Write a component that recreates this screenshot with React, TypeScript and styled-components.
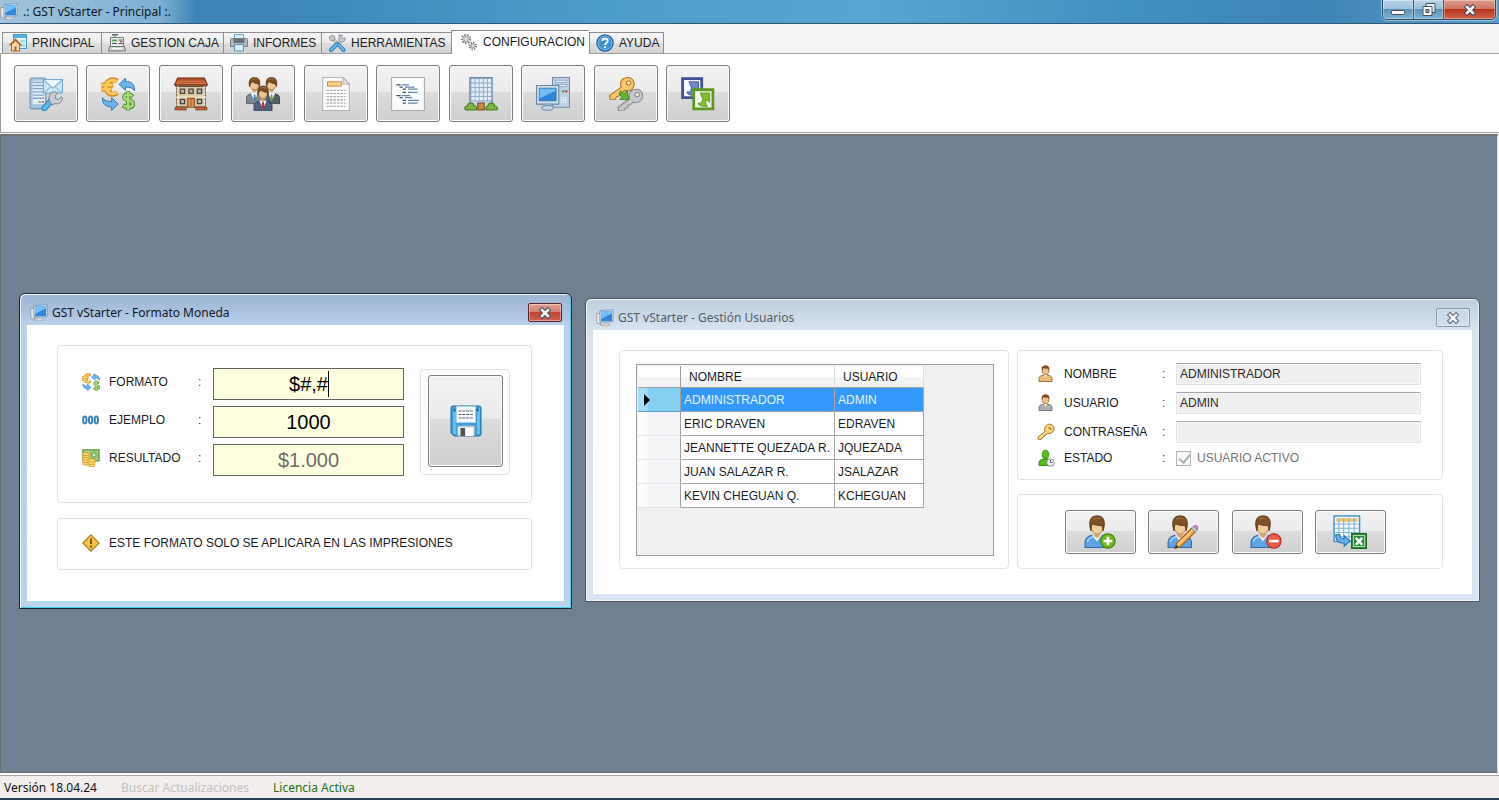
import React from "react";
import styled, { createGlobalStyle, css } from "styled-components";

const arial = `"Liberation Sans", Arial, sans-serif`;
const segoe = `"Segoe UI", "Noto Sans", "Open Sans", sans-serif`;

const GlobalStyle = createGlobalStyle`
  * { box-sizing: border-box; }
  body { margin: 0; background: #708090; }
  button, input { font: inherit; color: inherit; margin: 0; }
  svg { display: block; flex: none; }
`;

/* ---------- shell ---------- */

const Page = styled.div`
  display: flex;
  flex-direction: column;
  min-height: 100vh;
  font: 12px/16px ${arial};
  color: #1c1c1c;
  background: #f5f5f5;
`;

const TitleBar = styled.header`
  display: flex;
  justify-content: space-between;
  align-items: flex-start;
  height: 24px;
  padding-right: 3px;
  border-bottom: 1px solid #2d5878;
  background:
    linear-gradient(90deg, rgba(196, 218, 234, 0.75), rgba(170, 205, 228, 0.6) 160px, rgba(170, 205, 228, 0) 196px),
    linear-gradient(90deg, #3c82b5 0, #3c86b9 18%, #4c9ccb 40%, #57a5d0 58%, #4190c2 75%, #3d84b7 88%, #5b9cc6 100%);
`;

const Caption = styled.h1`
  display: flex;
  align-items: center;
  gap: 5px;
  height: 24px;
  margin: 0;
  font: 12px/16px ${segoe};
  color: #0c1520;
`;

const CaptionButtons = styled.div`
  display: flex;
  height: 20px;
  border: 1px solid #2c4a62;
  border-top: 0;
  border-radius: 0 0 5px 5px;
  overflow: hidden;
  box-shadow: 0 0 0 1px rgba(200, 225, 240, 0.6);
`;

const CaptionButton = styled.button<{ $close?: boolean }>`
  display: flex;
  align-items: center;
  justify-content: center;
  width: ${(p) => (p.$close ? 52 : 30)}px;
  padding: 0;
  border: 0;
  border-left: 1px solid #35566f;
  box-shadow: inset 0 0 0 1px rgba(255, 255, 255, 0.35);
  background: ${(p) =>
    p.$close
      ? "linear-gradient(#dc9c8c 0, #cf7765 45%, #b5301a 46%, #d0644a 100%)"
      : "linear-gradient(#b4d3e8 0, #9cc1da 45%, #5b8fb5 46%, #7fb4d6 100%)"};
  &:first-child { border-left: 0; }
`;

const TabStrip = styled.div`
  display: flex;
  align-items: flex-end;
  height: 29px;
  padding-left: 2px;
  background: #f5f5f5;
`;

const Tab = styled.button<{ $width: number; $active?: boolean }>`
  display: flex;
  align-items: center;
  gap: 5px;
  width: ${(p) => p.$width}px;
  height: 21px;
  padding: 0 0 0 6px;
  border: 1px solid #8c8e94;
  border-bottom: 0;
  border-right-width: 0;
  white-space: nowrap;
  background: linear-gradient(#f4f4f4 0, #ececec 50%, #dedede 51%, #d2d2d2 100%);
  &:last-child { border-right-width: 1px; }
  ${(p) =>
    p.$active &&
    css`
      position: relative;
      height: 24px;
      margin-bottom: -1px;
      padding: 0 0 2px 8px;
      background: #fff;
    `}
`;

const Toolbar = styled.div`
  padding: 11px 13px 10px;
  border: 1px solid #a0a0a0;
  border-right: 0;
  background: #fff;
`;

const ToolRow = styled.div`
  display: flex;
  justify-content: space-between;
  width: 716px;
  max-width: 100%;
`;

const FaceButton = styled.button<{ $width: number; $height: number }>`
  display: flex;
  align-items: center;
  justify-content: center;
  width: ${(p) => p.$width}px;
  height: ${(p) => p.$height}px;
  padding: 0;
  border: 1px solid #7c7c7c;
  border-radius: 3px;
  box-shadow: inset 0 0 0 1px #fafafa;
  background: linear-gradient(#f2f2f2 0, #ebebeb 47%, #dcdcdc 48%, #cfcfcf 100%);
`;

const Desktop = styled.main`
  position: relative;
  flex: 1;
  min-height: 500px;
  margin-top: 1px;
  margin-right: 1px;
  border: 1px solid #6a7076;
  border-top: 2px solid #6f7378;
  border-right-color: #e3e3e3;
  background: #708090;
  overflow: hidden;
`;

const StatusBar = styled.footer`
  display: flex;
  align-items: center;
  gap: 24px;
  height: 27px;
  padding: 2px 4px 0;
  border-top: 2px solid #fbfbfb;
  border-bottom: 2px solid #24465a;
  box-shadow: inset 0 1px 0 #a5a5a5;
  background: #f1eeec;
  font: 12px/16px ${segoe};
`;

const StatusText = styled.span<{ $tone?: "muted" | "ok" }>`
  color: ${(p) => (p.$tone === "muted" ? "#c3c0be" : p.$tone === "ok" ? "#1c7320" : "#141414")};
`;

/* ---------- child windows ---------- */

const Window = styled.section<{ $active?: boolean; $left: number; $top: number; $width: number }>`
  position: absolute;
  left: ${(p) => p.$left}px;
  top: ${(p) => p.$top}px;
  width: ${(p) => p.$width}px;
  padding: 0 7px 7px;
  border: 1px solid ${(p) => (p.$active ? "#1d262e" : "#4e565e")};
  border-radius: 6px 6px 0 0;
  background: ${(p) =>
    p.$active
      ? "linear-gradient(#9db6d3 0, #a9c1dd 16px, #b9d0ea 31px, #bcd3ec 100%)"
      : "linear-gradient(#c0cfdc 0, #cbd9e6 16px, #d7e3ef 31px, #d9e5f2 100%)"};
  box-shadow: ${(p) =>
    p.$active
      ? "inset 1px 1px 0 #f0f6fb, inset -1px -1px 0 #45cdea"
      : "inset 1px 1px 0 #eef3f7, inset -1px -1px 0 #eef3f7"};
`;

const WindowBar = styled.header`
  display: flex;
  align-items: center;
  justify-content: space-between;
  height: 31px;
  padding: 6px 2px 0 3px;
`;

const WindowTitle = styled.h2<{ $active?: boolean }>`
  display: flex;
  align-items: center;
  gap: 4px;
  margin: 0;
  font: 12px/16px ${segoe};
  color: ${(p) => (p.$active ? "#10161d" : "#525c66")};
`;

const WindowClose = styled.button<{ $active?: boolean }>`
  display: flex;
  align-items: center;
  justify-content: center;
  width: 34px;
  height: 19px;
  padding: 0;
  border: 1px solid ${(p) => (p.$active ? "#57202a" : "#8797aa")};
  border-radius: 2px;
  background: ${(p) =>
    p.$active
      ? "linear-gradient(#dfa197 0, #d48073 45%, #bc4030 46%, #cc6450 100%)"
      : "linear-gradient(#cad8e5, #d3dfeb)"};
  box-shadow: inset 0 0 0 1px rgba(255, 255, 255, 0.4);
`;

const Client = styled.div`
  background: #fff;
`;

const Group = styled.div`
  border: 1px solid #dde5eb;
  border-radius: 4px;
`;

const CurrencyClient = styled(Client)`
  display: flex;
  flex-direction: column;
  gap: 15px;
  padding: 20px 32px 31px 30px;
`;

const CurrencyGroup = styled(Group)`
  display: flex;
  gap: 16px;
  align-items: flex-start;
  padding: 22px 21px 26px 24px;
`;

const CurrencyFields = styled.div`
  display: flex;
  flex: 1;
  flex-direction: column;
  gap: 6px;
`;

const CurrencyRow = styled.div`
  display: flex;
  align-items: flex-start;
  height: 32px;
`;

const FieldLabel = styled.label<{ $width: number }>`
  display: flex;
  align-items: center;
  gap: 9px;
  width: ${(p) => p.$width}px;
`;

const Colon = styled.span<{ $width: number }>`
  width: ${(p) => p.$width}px;
  color: #4b3b3b;
`;

const CurrencyCaption = styled.div`
  display: flex;
  align-items: center;
  height: 28px;
`;

const CurrencyBox = styled.div`
  position: relative;
  flex: 1;
  height: 32px;
`;

const CurrencyInput = styled.input`
  width: 100%;
  height: 32px;
  padding: 0;
  border: 1px solid #646464;
  border-radius: 0;
  outline: 0;
  background: #ffffe1;
  font: 20px/30px ${arial};
  text-align: center;
  color: #000;
  &:read-only { color: #6d6d6d; }
`;

const Caret = styled.span`
  position: absolute;
  top: 3px;
  left: calc(50% + 19px);
  width: 1px;
  height: 26px;
  background: #000;
`;

const SaveFrame = styled(Group)`
  padding: 5px 6px 7px 7px;
  margin-top: 1px;
`;

const Notice = styled(Group)`
  display: flex;
  align-items: center;
  gap: 9px;
  height: 52px;
  padding: 0 0 2px 24px;
`;

const UsersClient = styled(Client)`
  display: grid;
  grid-template-columns: 390px 1fr;
  grid-template-rows: 130px 75px;
  gap: 14px 8px;
  padding: 20px 29px 25px 26px;
`;

const GridGroup = styled(Group)`
  grid-row: 1 / 3;
  padding: 13px 14px 12px 16px;
`;

const GridPanel = styled.div`
  height: 100%;
  padding: 1px;
  border: 1px solid #a0a0a0;
  background: #f0f0f0;
`;

const DataGrid = styled.table`
  width: 286px;
  table-layout: fixed;
  border-collapse: separate;
  border-spacing: 0;
  text-align: left;
  white-space: nowrap;
`;

const HeadCell = styled.th<{ $width: number }>`
  width: ${(p) => p.$width}px;
  height: 22px;
  padding: 0 0 0 8px;
  border-right: 1px solid #dcdde0;
  border-bottom: 1px solid #a0a0a0;
  font-weight: 400;
  background: linear-gradient(#fff 0, #fff 50%, #f4f5f7 51%, #f1f2f4 100%);
  &:first-child { border-right-color: #a0a0a0; }
`;

const RowHead = styled.th<{ $selected: boolean }>`
  height: 24px;
  padding: 0 0 0 5px;
  border-right: 1px solid #a0a0a0;
  border-bottom: 1px solid ${(p) => (p.$selected ? "#5c9dbd" : "#e2e3e6")};
  background: ${(p) =>
    p.$selected
      ? "linear-gradient(90deg, #a5def5 0, #a5def5 22%, #84d0f1 23%)"
      : "linear-gradient(90deg, #fff 0, #fafafb 22%, #f3f4f6 23%)"};
`;

const Cell = styled.td<{ $selected: boolean }>`
  padding: 0 0 0 3px;
  border-right: 1px solid #a6a6a6;
  border-bottom: 1px solid #a6a6a6;
  color: ${(p) => (p.$selected ? "#e6f3ff" : "inherit")};
  background: ${(p) => (p.$selected ? "#3399ff" : "#fff")};
`;

const DetailGroup = styled(Group)`
  display: flex;
  flex-direction: column;
  gap: 7px;
  padding: 12px 21px 0 19px;
`;

const DetailRow = styled.div`
  display: flex;
  align-items: center;
  height: 22px;
  &:last-child { height: 16px; }
`;

const DetailInput = styled.input`
  flex: 1;
  min-width: 0;
  height: 22px;
  padding: 0 3px;
  border: 1px solid #dfe3e8;
  border-top-color: #a3a5aa;
  border-radius: 1px;
  background: #efefef;
  box-shadow: inset 0 0 0 1px #f8f8f8;
  color: #2a2a2a;
`;

const ActiveLabel = styled.label`
  display: flex;
  align-items: center;
  gap: 6px;
  color: #747474;
`;

const Check = styled.input`
  appearance: none;
  width: 15px;
  height: 15px;
  border: 1px solid #b4b4b4;
  background: #f7f7f7;
  &:checked::before {
    content: "";
    display: block;
    width: 5px;
    height: 9px;
    margin: 0 0 0 4px;
    border: solid #a9adb3;
    border-width: 0 2px 2px 0;
    transform: rotate(40deg);
  }
`;

const ActionGroup = styled(Group)`
  display: flex;
  align-items: center;
  justify-content: space-between;
  padding: 0 56px 0 47px;
`;

/* ---------- icons ---------- */

type IconProps = { size?: number };

const Svg = ({ size = 34, box = 32, children }: { size?: number; box?: number; children: React.ReactNode }) => (
  <svg width={size} height={size} viewBox={`0 0 ${box} ${box}`} fill="none" aria-hidden="true">
    {children}
  </svg>
);

const WindowIcon = () => (
  <Svg size={18} box={18}>
    <path d="M.8 4.500h3.500V15L.8 14z" fill="#ecebe6" stroke="#8c8d90" strokeWidth=".7" />
    <path d="M7 12.500l-1 3.500h8l-1-3.500z" fill="#cdd1d5" />
    <path d="M4 16q6.500-2.500 10 0-4 1.500-10 0z" fill="#f4f5f6" stroke="#8f949a" strokeWidth=".6" />
    <path d="M4 1.500l13-.7v12L4 13z" fill="#eaf3fa" stroke="#4f7fa9" strokeWidth=".7" />
    <path d="M5 2.500L16 2v10l-11 .2z" fill="#2f86da" />
    <path d="M5 2.500L16 2v2.500L5 10z" fill="#74bff6" />
  </Svg>
);

const CloseGlyph = ({ dim }: { dim?: boolean }) => (
  <svg width="14" height="12" viewBox="0 0 14 12" aria-hidden="true">
    <path d="M4 3l6 6M10 3L4 9" stroke={dim ? "#5c6a7c" : "#4a4f5c"} strokeWidth="4.600" strokeLinecap="square" />
    <path d="M4 3l6 6M10 3L4 9" stroke="#f6f7f9" strokeWidth="2.500" strokeLinecap="square" />
  </svg>
);

const MinGlyph = () => (
  <svg width="14" height="12" viewBox="0 0 14 12" aria-hidden="true">
    <rect x=".5" y="6.500" width="13" height="4" rx="1" fill="#fff" stroke="#44505e" />
  </svg>
);

const RestoreGlyph = () => (
  <svg width="14" height="13" viewBox="0 0 14 13" aria-hidden="true">
    <path d="M4 .5h9v9H4z" fill="#e9eef2" stroke="#44505e" />
    <path d="M1 3.500h9v9H1z" fill="#fff" stroke="#44505e" />
    <path d="M4 6.500h3v3H4z" fill="#8ab0cc" stroke="#44505e" />
  </svg>
);

const Wrench = () => (
  <>
    <path d="M14.500 29.500l6-7" stroke="#2477b5" strokeWidth="5.600" strokeLinecap="round" />
    <path d="M14.500 29.500l6-7" stroke="#5cb8ec" strokeWidth="3.800" strokeLinecap="round" />
    <path
      d="M19 21.500c-1-4.500 2-8 6.500-7.500l1.500 1.500-2.500 2 .5 3 3 .5 2.500-2.500 1 1.500c0 4-4 6-7.500 5l-2.500 1.500z"
      fill="#c9ced4"
      stroke="#757d85"
      strokeWidth=".9"
    />
  </>
);

const ServerMailIcon = () => (
  <Svg>
    <rect x="1" y="1" width="15" height="29" rx="1.500" fill="#a9c5de" stroke="#6f93b3" />
    <path d="M3.500 3.500H15v22H3.500z" fill="#e4eef6" />
    <path d="M3.500 5h11M3.500 8h11M3.500 11h11M3.500 14h11M3.500 17h11M3.500 20h11" stroke="#87a7c4" strokeWidth="1.200" />
    <path d="M9 23.500h2" stroke="#54a33b" strokeWidth="1.500" />
    <path d="M12 23.500h2" stroke="#c8532e" strokeWidth="1.500" />
    <rect x="13.500" y="2.500" width="18" height="12.500" fill="#cbe5f9" stroke="#6da3ce" />
    <path d="M14 15l7-6.500M31 15l-7-6.500" stroke="#8fbadd" />
    <path d="M14 3l8.500 7.500L31 3" fill="#f2f9fe" stroke="#79a9d0" />
    <Wrench />
  </Svg>
);

const CurrencyIcon = ({ size }: IconProps) => (
  <Svg size={size}>
    <g fill="none">
      <path d="M15.500 4C8 0 4.500 6 4.500 9.500S8 19 15.500 15M.5 7.500h11M.5 11.500h10" stroke="#c98a24" strokeWidth="4.600" />
      <path d="M15 4.300C8 .8 4.500 6 4.500 9.500S8 18 15 14.700M1 7.500h10M1 11.500h9" stroke="#fbc857" strokeWidth="2.800" />
      <path d="M30 18.500c-3-3-8.500-2.500-8 .8.500 3.500 8 2 8 6 0 4-6 3.700-9.500 1.500M25.500 13.500v18" stroke="#4f9138" strokeWidth="4.200" />
      <path d="M29.500 18.200c-3-2.500-8-2.200-7.500 1.100.5 3.500 8 2 8 6 0 3.700-6 3.500-9 1.500M25.500 14v17" stroke="#aadb7a" strokeWidth="2.300" />
    </g>
    <path d="M17 7L23 1v3c5 0 9 2.500 8.500 9-1.500-3-4.500-3.500-8.500-3.500v3z" fill="#6db5e8" stroke="#2c74ad" strokeWidth=".9" />
    <path d="M16 25.500L10 31.500V28.200c-5 0-9-2.500-8.500-8.700 1.500 3 4.500 3.500 8.500 3.500v-3.500z" fill="#6db5e8" stroke="#2c74ad" strokeWidth=".9" />
  </Svg>
);

const HouseIcon = () => (
  <Svg>
    <path d="M2.500 9h27v19h-27z" fill="#d9cba9" stroke="#776b51" />
    <path d="M3.500 1h25l3 6.500H.5z" fill="#b4532b" stroke="#6d2b15" />
    <path d="M2.500 4h27M1.500 6h29" stroke="#d37a48" />
    <path d="M1 8.500h30" stroke="#6b3a22" strokeWidth="1.200" />
    <path d="M2 19h28" stroke="#f2e9d0" strokeWidth="1.200" />
    <path d="M6 11.500h4v4H6zM14 11.500h4v4h-4zM22 11.500h4v4h-4zM6 21h4v4H6zM22 21h4v4h-4z" fill="#a9b9c9" stroke="#5c3e34" strokeWidth="1.200" />
    <path d="M3.500 9v10M28.500 9v10M3.500 19v9M28.500 19v9" stroke="#f4eedf" strokeDasharray="1.500 1.500" strokeWidth="1.600" />
    <path d="M13 20h6v9h-6z" fill="#e79a54" stroke="#7d3c1d" />
    <path d="M16 20v9" stroke="#9c5329" />
    <path d="M1 28.500h11v2.500H1zM20 28.500h11v2.500H20z" fill="#c8673b" stroke="#7b351c" strokeWidth=".7" />
    <path d="M12 29h8v2.500h-8z" fill="#d6d6d0" />
  </Svg>
);

const Head = ({ x, y }: { x: number; y: number }) => (
  <g transform={`translate(${x} ${y})`}>
    <path d="M3 8h5v4l-2.500 2L3 12z" fill="#cf9f66" />
    <ellipse cx="5.500" cy="6.500" rx="4.200" ry="5" fill="#eac694" stroke="#9a6a38" strokeWidth=".6" />
    <path d="M.8 8.500C-.5 2 2 0 5.500 0s6 2 4.700 8.500L9.500 6C7 6 5 5 3.500 4L1.500 6z" fill="#7b4a1f" stroke="#4f2c0e" strokeWidth=".6" />
    <path d="M3 2q2.500-1.500 5 0" stroke="#a97a43" strokeWidth=".8" />
  </g>
);

const PeopleIcon = () => (
  <Svg>
    <path d="M0 25v-5.500q1-3 5-4h7q3 .5 4 3V25z" fill="#80868d" stroke="#494f57" strokeWidth=".7" />
    <path d="M32 25v-5.500q-1-3-5-4h-7q-3 .5-4 3V25z" fill="#595e65" stroke="#33373c" strokeWidth=".7" />
    <path d="M4.500 15l3.500 8 3-8zM21 15l3 8 3.500-8z" fill="#f4f6f8" />
    <path d="M7.500 16.500h1.200l.8 4.500-1.300 2-1.200-2z" fill="#4579b8" />
    <path d="M23.500 16.500h1.200l.6 4.500-1.200 2-1.200-2z" fill="#58a038" />
    <Head x={2.500} y={0.500} />
    <Head x={18.500} y={0.500} />
    <path d="M7.500 31.500V26q1-2.500 5-3.500h7q4 1 5 3.500v5.500z" fill="#4f6180" stroke="#2c394e" strokeWidth=".7" />
    <path d="M12.500 22l3.500 8 3.500-8z" fill="#fff" />
    <path d="M15.300 23h1.400l.8 5-1.500 2.500-1.500-2.500z" fill="#c4302b" />
    <Head x={10.500} y={8.500} />
  </Svg>
);

const DocumentIcon = () => (
  <Svg>
    <path d="M3.500.5h19l6 6v25h-25z" fill="#fbfbfb" stroke="#b4b4b4" />
    <path d="M22.500.5v6h6z" fill="#e2e2e2" stroke="#b4b4b4" />
    <rect x="8" y="4.500" width="13" height="4" fill="#fbd59a" stroke="#db8d35" />
    <path
      d="M7 12.500h18M7 15.500h18M7 18.500h18M7 21.500h18M7 24.500h18M7 27.500h18"
      stroke="#9d9d9d"
      strokeDasharray="2.500 .8"
    />
  </Svg>
);

const ListIcon = () => (
  <Svg>
    <path d="M.5.500h31v31H.5z" fill="#f4f6f7" stroke="#adadad" />
    <path d="M2 2h28v28H2z" fill="#fdfefe" />
    <path d="M5 7.500h4M8 9.500h3M11 11.500h3M11 14.500h3M5 17.500h4M8 19.500h3M11 22h3M11 24.500h3" stroke="#394b66" strokeWidth="1.200" />
    <path d="M10 7.500h7M13 9.500h9M16 11.500h9M16 14.500h9M10 17.500h8M13 19.500h7M16 22h10M16 24.500h9" stroke="#6484b0" strokeWidth="1.200" />
  </Svg>
);

const TowerIcon = () => (
  <Svg>
    <path d="M5.500.5h21v30h-21z" fill="#93aec8" stroke="#6a87a4" />
    {[2, 6.2, 10.4, 14.6, 18.8].map((y) =>
      [7, 10.9, 14.8, 18.7, 22.6].map((x) => (
        <rect key={`${x}-${y}`} x={x} y={y} width="3" height="3.200" fill="#e3edf7" />
      )),
    )}
    <path d="M7 23h18v7H7z" fill="#c6d6e5" />
    <path d="M13 24.500h6V31h-6z" fill="#c98746" stroke="#7d4a1d" />
    <path d="M1.500 31c-1.500-2-.5-3.500 1.500-3.500C3.500 23.500 9 23.500 9.500 27c2.500.2 2.800 2.500 1.800 4zM21 31c-1-2 0-3.500 1.500-3.500 0-4 6-4 6.500 0 2.500.2 3 2 2 3.500z" fill="#7cb544" stroke="#467a1f" />
  </Svg>
);

const ComputerIcon = () => (
  <Svg>
    <path d="M15.500.5h16v28h-16z" fill="#bfd2e3" stroke="#6d8dab" />
    <path d="M18 3h11v2H18zM18 7h11v2H18z" fill="#e8f1f8" stroke="#7f9fbb" strokeWidth=".7" />
    <path d="M24.500 13.500h2" stroke="#48a132" strokeWidth="2" />
    <path d="M27.500 13.500h2" stroke="#c9392b" strokeWidth="2" />
    <path d="M24 19v6M26 19v6M28 19v6" stroke="#f2f7fb" strokeDasharray="1.200 .8" strokeWidth="1.300" />
    <path d="M.5 8h21v17.500H.5z" fill="#cfdfeb" stroke="#6486a4" />
    <path d="M3 10.500h16v12H3z" fill="#2d86d8" stroke="#3f6d95" strokeWidth=".6" />
    <path d="M3.500 11h15v2L3.500 20z" fill="#72bdf3" />
    <path d="M8.500 25.500h5v2.500h-5z" fill="#a9bfd2" />
    <ellipse cx="11" cy="29" rx="5.500" ry="2.300" fill="#c6d8e7" stroke="#7091ad" />
  </Svg>
);

const Key = ({ fill, edge }: { fill: string; edge: string }) => (
  <>
    <path
      d="M11.500 9.500C9.500 4 13 .5 17.500.5c5 0 7.500 5 5.500 9-1.800 3.500-5.500 4.300-8.500 3.200L12.500 15l-2.500.5-.5 2.500-2.500.5-1 2.500H1l-.5-3.500z"
      fill={fill}
      stroke={edge}
    />
    <circle cx="18.500" cy="5.500" r="2" fill="#f3efe6" stroke={edge} />
  </>
);

const KeysIcon = () => (
  <Svg>
    <Key fill="#f5c76c" edge="#b3751f" />
    <g transform="translate(8 11)">
      <Key fill="#c6c8ca" edge="#85888c" />
    </g>
    <path d="M11 13l3 3 3-3.500 1.500 9L10 21l2.300-2.200L9.500 16z" fill="#63b72e" stroke="#397d13" strokeWidth=".8" />
  </Svg>
);

const LinkTile = ({ edge, fill }: { edge: string; fill: string }) => (
  <>
    <path d="M1.500 1.500h18v18h-18z" fill="#f7f8fc" stroke={edge} strokeWidth="2.600" />
    <path d="M7.500 4.500h9v9l-2.800-2.500c-1.500 2-1.200 3.500.8 6-4.500.5-8.500 0-9-3 2.500.5 4-.5 4.300-4z" fill={fill} stroke={edge} strokeWidth=".8" />
  </>
);

const ShortcutsIcon = () => (
  <Svg>
    <LinkTile edge="#3f4f93" fill="#7386c6" />
    <g transform="translate(10.500 10.500)">
      <LinkTile edge="#5c9a17" fill="#7fbb2a" />
    </g>
  </Svg>
);

const HomeTabIcon = () => (
  <Svg size={18} box={18}>
    <path d="M4.500.5h13v14h-13z" fill="#e7f3fb" stroke="#4595c6" />
    <path d="M5 1h12v3H5z" fill="#59b3e2" />
    <path d="M11 6h5v2.500h-5zM12 10h4v3h-4z" fill="#a9d8f1" />
    <path d="M2.500 10.500V17h8v-6.500L6.500 7z" fill="#f6d9a6" stroke="#9a6426" />
    <path d="M.5 11.500l6-6 6 6" stroke="#b06a2a" strokeWidth="1.700" />
    <path d="M5.500 12.500h2V17h-2z" fill="#a35c27" />
  </Svg>
);

const RegisterIcon = () => (
  <Svg size={18} box={18}>
    <path d="M4 .8h6" stroke="#555b58" strokeWidth="1.400" />
    <path d="M7 1v3" stroke="#757b78" />
    <path d="M2.500 3.500h13v9h-13z" fill="#eef0ee" stroke="#767c79" />
    <path d="M4 5.500h5v2H4z" fill="#58a85a" />
    <path d="M10.500 6h4M10.500 9.500h4M4 9.500h5" stroke="#454b48" />
    <path d="M12 7.700h2.500" stroke="#cc4433" strokeWidth="1.200" />
    <path d="M1.500 12.500h15l1 4.500H.5z" fill="#cfd5d2" stroke="#6a706d" />
    <path d="M4 14.700h10" stroke="#fff" />
  </Svg>
);

const PrinterIcon = () => (
  <Svg size={18} box={18}>
    <path d="M4.500.5h9v5h-9z" fill="#d9eefa" stroke="#6aa7cc" />
    <path d="M.5 5.500q0-1 1-1h15q1 0 1 1v7H.5z" fill="#b4b9be" stroke="#7b8086" />
    <path d="M3.500 5h11v4h-11z" fill="#6b7076" />
    <path d="M4.500 10.500h9v6.500h-9z" fill="#c4e4f7" stroke="#5c9ac0" />
    <path d="M6 13h6M6 15h6" stroke="#fff" />
  </Svg>
);

const ToolsIcon = () => (
  <Svg size={18} box={18}>
    <path d="M5 5l10 10.500" stroke="#8b9197" strokeWidth="3" />
    <path d="M5 5l10 10.500" stroke="#d6dade" strokeWidth="1.500" />
    <path d="M1 3.500L4 1l3 2-1 3.500L3 7zM11 .8l3.500.7-1 2 1.500 1 2-.8.2 2.500L14 8.500l-3-1.500z" fill="#c8cdd2" stroke="#7c8288" strokeWidth=".8" />
    <path d="M11 8l-2 2" stroke="#888e94" strokeWidth="3" />
    <path d="M8.500 10.500L3 16M11 11l4.500 5" stroke="#2478b4" strokeWidth="4" strokeLinecap="round" />
    <path d="M8.500 10.500L3 16M11 11l4.500 5" stroke="#68bbea" strokeWidth="2.300" strokeLinecap="round" />
  </Svg>
);

const GearsIcon = () => (
  <Svg size={18} box={18}>
    <circle cx="6" cy="6" r="4" stroke="#8a8a8a" strokeWidth="2.600" strokeDasharray="1.500 1.300" />
    <circle cx="6" cy="6" r="2.800" fill="#f9f9f9" stroke="#a2a2a2" strokeWidth=".8" />
    <path d="M4.800 2v8M7.200 2v8" stroke="#9b9b9b" strokeWidth=".8" />
    <circle cx="12.800" cy="13" r="3" stroke="#858585" strokeWidth="2.600" strokeDasharray="1.200 1.150" />
    <circle cx="12.800" cy="13" r="1.800" fill="#e6e6e6" stroke="#8b8b8b" strokeWidth=".8" />
  </Svg>
);

const HelpIcon = () => (
  <Svg size={18} box={18}>
    <circle cx="9" cy="9" r="8" fill="#3d8fd0" stroke="#20609c" strokeWidth="1.400" />
    <circle cx="9" cy="9" r="6.900" stroke="#8cc5ee" />
    <path d="M6.300 7C6.300 3.800 11.700 3.800 11.700 7c0 2-2.700 2-2.700 4" stroke="#fff" strokeWidth="1.800" />
    <circle cx="9" cy="13.200" r="1.100" fill="#fff" />
  </Svg>
);

const ZerosIcon = () => (
  <Svg size={18} box={18}>
    {[2.8, 8.6, 14.4].map((x) => (
      <ellipse key={x} cx={x} cy="9" rx="1.700" ry="3.400" stroke="#3b82bd" strokeWidth="2" />
    ))}
  </Svg>
);

const MoneyIcon = () => (
  <Svg size={18} box={18}>
    <path d="M1 .8h16v11H1z" fill="#b8d98b" stroke="#59913a" strokeWidth="1.300" />
    <path d="M9 3h6v6H9z" fill="#e4f2cd" stroke="#6ca54b" />
    <circle cx="12" cy="6" r="2" stroke="#5c9639" />
    {[14.5, 12, 9.5, 7, 5].map((y) => (
      <ellipse key={y} cx="4" cy={y} rx="3.500" ry="1.700" fill="#fbd76b" stroke="#c98d22" strokeWidth=".7" />
    ))}
    {[16, 13.8, 11.5].map((y) => (
      <ellipse key={y} cx="9.500" cy={y} rx="3.700" ry="1.700" fill="#fcdc78" stroke="#c98d22" strokeWidth=".7" />
    ))}
  </Svg>
);

const WarningIcon = () => (
  <Svg size={18} box={18}>
    <path d="M9 .8L17.200 9 9 17.200.8 9z" fill="#f8c441" stroke="#a87a1c" strokeWidth="1.100" />
    <path d="M9 4.500v5.500M9 11.500v2" stroke="#43330c" strokeWidth="1.500" />
  </Svg>
);

const FloppyIcon = () => (
  <Svg size={32}>
    <path d="M1 3q0-2 2-2h26q2 0 2 2v26q0 2-2 2H4l-3-3z" fill="#3fa0dc" stroke="#1f6ea8" />
    <path d="M3 3h3v26H4l-1-1zM27 3h3v26h-3z" fill="#67bdee" />
    <path d="M3.500 3.500h2v3h-2zM26.500 3.500h2v3h-2z" fill="#1d5f93" />
    <path d="M6.500 1.500h19v16h-19z" fill="#fcfdfe" stroke="#a9cfe6" />
    <path d="M8.500 6h15M8.500 9.500h15M8.500 13h15" stroke="#5a5f66" strokeWidth="1.200" strokeDasharray="3 .8" />
    <path d="M7.500 21h17v10h-17z" fill="#e6e9ed" stroke="#99a7b5" />
    <path d="M10.500 23h4.500v8h-4.500z" fill="#4f545b" />
    <path d="M16 23h7v8h-7z" fill="#f8fafb" />
  </Svg>
);

const SmallPerson = ({ shirt, edge, clock }: { shirt: string; edge: string; clock?: boolean }) => (
  <Svg size={18} box={18}>
    <path d="M2 16.500v-4q1-2 5-2.500h3q4 .5 5 2.500v4z" fill={shirt} stroke={edge} strokeWidth=".9" />
    <ellipse cx="8.500" cy="5.500" rx="3.300" ry="4.300" fill={clock ? "#57bb20" : "#eac28c"} stroke={clock ? edge : "#94622f"} strokeWidth=".8" />
    {!clock && <path d="M5 6C4 2 5.500.5 8.500.5S13 2 12 6l-1-2.500q-3 .5-5-.5z" fill="#7b4a20" />}
    {!clock && <path d="M6.500 10l2 2.500 2-2.500z" fill="#f7ead0" />}
    {clock && <circle cx="13.500" cy="13.500" r="3.800" fill="#f1f4f6" stroke="#878e94" />}
    {clock && <path d="M13.500 11v2.500h2" stroke="#555b61" />}
  </Svg>
);

const SmallKeyIcon = () => (
  <Svg size={18} box={18}>
    <path d="M8 8.500C6.500 4 9.500.8 13 1.200c4 .5 5 5 3 7.500-1.500 2-4 2.200-5.500 1.500L9 12l-1.700.3-.3 1.700-1.500.3-.8 2H1l-.2-2z" fill="#f7cf7c" stroke="#a9772a" />
    <path d="M11.500 4.500l3 2" stroke="#a9772a" strokeWidth="1.500" />
    <path d="M2.500 15L9 9" stroke="#fff0c6" />
  </Svg>
);

const UserBase = () => (
  <>
    <path d="M1 30.500V25q1-5 7-6h8q6 1 7 6v5.500z" fill="#5fa4e2" stroke="#2d69ac" />
    <path d="M3 25q2-4 6-4.500" stroke="#a5d1f6" strokeWidth="1.500" />
    <path d="M7.500 18.500L12 25l5-6.500z" fill="#f4f8fc" />
    <path d="M9.500 15h5.500v5l-2.700 2-2.800-2z" fill="#d9aa70" />
    <ellipse cx="12.300" cy="11" rx="5.500" ry="7" fill="#efcd9b" stroke="#a8763f" strokeWidth=".7" />
    <path d="M6.500 15C3.500 5 6.500.8 12.300.8S21 5 18 15l-.8-5C13 10 10 9.500 8.500 8.500L7.200 10z" fill="#7d5025" stroke="#4c2d10" strokeWidth=".7" />
    <path d="M8.500 4q3-2 7-.5" stroke="#a9783f" />
  </>
);

const UserAddIcon = () => (
  <Svg>
    <UserBase />
    <circle cx="22.500" cy="24.500" r="6.800" fill="#6cba1f" stroke="#3f7e0d" />
    <path d="M22.500 20.500v8M18.500 24.500h8" stroke="#fff" strokeWidth="2.400" />
  </Svg>
);

const UserEditIcon = () => (
  <Svg>
    <UserBase />
    <path d="M7.500 31.500l1.500-5 14-14 3.500 3.500-14 14z" fill="#f6ab45" stroke="#9a5d16" />
    <path d="M10.500 28L24.500 14" stroke="#fbd391" />
    <path d="M23 12.500l2-2 3.500 3.500-2 2z" fill="#c7cdd3" stroke="#7d838a" strokeWidth=".8" />
    <path d="M25 10.500q2.500-1.500 3.500 0t0 3.500z" fill="#d79adf" stroke="#8f569a" strokeWidth=".8" />
    <path d="M7.500 31.500l1.200-3.500 2.300 2.300z" fill="#3c3228" />
  </Svg>
);

const UserRemoveIcon = () => (
  <Svg>
    <UserBase />
    <circle cx="22.500" cy="24.500" r="6.800" fill="#e95a4d" stroke="#b02c22" />
    <path d="M18 24.500h9" stroke="#fff" strokeWidth="2.400" />
  </Svg>
);

const ExportIcon = () => (
  <Svg>
    <path d="M1 1h24v24H1z" fill="#f4fafe" stroke="#4595c6" strokeWidth="1.400" />
    <path d="M3 3h20v3.500H3z" fill="#f1c46a" />
    <path d="M2 8.500h22M2 12.500h22M2 16.500h22M2 20.500h22M5.500 3v21M10 3v21M15 3v21M20 3v21" stroke="#7fb2dc" />
    <path d="M2.500 18.500h4c0 3 1.500 4 4 4v-3l5.500 5-5.500 5v-3c-5 0-8-3-8-8z" fill="#62b4e6" stroke="#266ea8" />
    <path d="M17.500 17.500h14v14h-14z" fill="#2f8d3f" stroke="#1b6428" />
    <path d="M19.300 19.300h10.400v10.400H19.300z" stroke="#a9d9a7" />
    <path d="M21.500 21.500l6 6.500M27.500 21.500l-6 6.500" stroke="#fff" strokeWidth="2.300" />
  </Svg>
);

/* ---------- data ---------- */

const tabs = [
  { name: "PRINCIPAL", icon: <HomeTabIcon />, width: 99 },
  { name: "GESTION CAJA", icon: <RegisterIcon />, width: 122 },
  { name: "INFORMES", icon: <PrinterIcon />, width: 98 },
  { name: "HERRAMIENTAS", icon: <ToolsIcon />, width: 130 },
  { name: "CONFIGURACION", icon: <GearsIcon />, width: 138, active: true },
  { name: "AYUDA", icon: <HelpIcon />, width: 75 },
];

const tools = [
  { name: "Servidor de correo", icon: <ServerMailIcon /> },
  { name: "Formato moneda", icon: <CurrencyIcon /> },
  { name: "Empresa", icon: <HouseIcon /> },
  { name: "Usuarios", icon: <PeopleIcon /> },
  { name: "Documento", icon: <DocumentIcon /> },
  { name: "Listado", icon: <ListIcon /> },
  { name: "Sucursales", icon: <TowerIcon /> },
  { name: "Equipos", icon: <ComputerIcon /> },
  { name: "Claves", icon: <KeysIcon /> },
  { name: "Accesos directos", icon: <ShortcutsIcon /> },
];

const users = [
  ["ADMINISTRADOR", "ADMIN"],
  ["ERIC DRAVEN", "EDRAVEN"],
  ["JEANNETTE QUEZADA R.", "JQUEZADA"],
  ["JUAN SALAZAR R.", "JSALAZAR"],
  ["KEVIN CHEGUAN Q.", "KCHEGUAN"],
];

const currencyFields = [
  { id: "formato", label: "FORMATO", icon: <CurrencyIcon size={18} />, value: "$#,#", caret: true },
  { id: "ejemplo", label: "EJEMPLO", icon: <ZerosIcon />, value: "1000" },
  { id: "resultado", label: "RESULTADO", icon: <MoneyIcon />, value: "$1.000", readOnly: true },
];

const userFields = [
  { id: "nombre", label: "NOMBRE", icon: <SmallPerson shirt="#e4bb7c" edge="#94682f" />, value: "ADMINISTRADOR", type: "text" },
  { id: "usuario", label: "USUARIO", icon: <SmallPerson shirt="#a9aeb4" edge="#6a6f75" />, value: "ADMIN", type: "text" },
  { id: "clave", label: "CONTRASEÑA", icon: <SmallKeyIcon />, value: "", type: "password" },
];

const userActions = [
  { name: "Agregar usuario", icon: <UserAddIcon /> },
  { name: "Editar usuario", icon: <UserEditIcon /> },
  { name: "Eliminar usuario", icon: <UserRemoveIcon /> },
  { name: "Exportar a Excel", icon: <ExportIcon /> },
];

/* ---------- windows ---------- */

const CurrencyWindow = () => (
  <Window $active $left={18} $top={157} $width={553}>
    <WindowBar>
      <WindowTitle $active>
        <WindowIcon />
        GST vStarter - Formato Moneda
      </WindowTitle>
      <WindowClose $active aria-label="Cerrar">
        <CloseGlyph />
      </WindowClose>
    </WindowBar>
    <CurrencyClient>
      <CurrencyGroup>
        <CurrencyFields>
          {currencyFields.map((f) => (
            <CurrencyRow key={f.id}>
              <CurrencyCaption>
                <FieldLabel htmlFor={f.id} $width={116}>
                  {f.icon}
                  {f.label}
                </FieldLabel>
                <Colon $width={15}>:</Colon>
              </CurrencyCaption>
              <CurrencyBox>
                <CurrencyInput id={f.id} defaultValue={f.value} readOnly={f.readOnly} />
                {f.caret && <Caret />}
              </CurrencyBox>
            </CurrencyRow>
          ))}
        </CurrencyFields>
        <SaveFrame>
          <FaceButton $width={75} $height={92} aria-label="Guardar">
            <FloppyIcon />
          </FaceButton>
        </SaveFrame>
      </CurrencyGroup>
      <Notice>
        <WarningIcon />
        ESTE FORMATO SOLO SE APLICARA EN LAS IMPRESIONES
      </Notice>
    </CurrencyClient>
  </Window>
);

const UsersWindow = () => (
  <Window $left={584} $top={162} $width={895}>
    <WindowBar>
      <WindowTitle>
        <WindowIcon />
        GST vStarter - Gestión Usuarios
      </WindowTitle>
      <WindowClose aria-label="Cerrar">
        <CloseGlyph dim />
      </WindowClose>
    </WindowBar>
    <UsersClient>
      <GridGroup>
        <GridPanel>
          <DataGrid>
            <thead>
              <tr>
                <HeadCell $width={43} aria-label="Selección" />
                <HeadCell $width={154}>NOMBRE</HeadCell>
                <HeadCell $width={89}>USUARIO</HeadCell>
              </tr>
            </thead>
            <tbody>
              {users.map(([name, login], i) => (
                <tr key={login}>
                  <RowHead $selected={i === 0} scope="row">
                    {i === 0 && (
                      <svg width="7" height="12" viewBox="0 0 7 12" aria-hidden="true">
                        <path d="M1 0l6 6-6 6z" fill="#000" />
                      </svg>
                    )}
                  </RowHead>
                  <Cell $selected={i === 0}>{name}</Cell>
                  <Cell $selected={i === 0}>{login}</Cell>
                </tr>
              ))}
            </tbody>
          </DataGrid>
        </GridPanel>
      </GridGroup>
      <DetailGroup>
        {userFields.map((f) => (
          <DetailRow key={f.id}>
            <FieldLabel htmlFor={f.id} $width={125}>
              {f.icon}
              {f.label}
            </FieldLabel>
            <Colon $width={14}>:</Colon>
            <DetailInput id={f.id} type={f.type} defaultValue={f.value} disabled />
          </DetailRow>
        ))}
        <DetailRow>
          <FieldLabel htmlFor="activo" $width={125}>
            <SmallPerson shirt="#57bb20" edge="#33800c" clock />
            ESTADO
          </FieldLabel>
          <Colon $width={14}>:</Colon>
          <ActiveLabel>
            <Check id="activo" type="checkbox" defaultChecked disabled />
            USUARIO ACTIVO
          </ActiveLabel>
        </DetailRow>
      </DetailGroup>
      <ActionGroup>
        {userActions.map((a) => (
          <FaceButton key={a.name} $width={71} $height={44} aria-label={a.name}>
            {a.icon}
          </FaceButton>
        ))}
      </ActionGroup>
    </UsersClient>
  </Window>
);

export default function App() {
  return (
    <>
      <GlobalStyle />
      <Page>
        <TitleBar>
          <Caption>
            <WindowIcon />
            .: GST vStarter - Principal :.
          </Caption>
          <CaptionButtons>
            <CaptionButton aria-label="Minimizar">
              <MinGlyph />
            </CaptionButton>
            <CaptionButton aria-label="Restaurar">
              <RestoreGlyph />
            </CaptionButton>
            <CaptionButton $close aria-label="Cerrar">
              <CloseGlyph />
            </CaptionButton>
          </CaptionButtons>
        </TitleBar>
        <TabStrip role="tablist">
          {tabs.map((t) => (
            <Tab key={t.name} role="tab" aria-selected={!!t.active} $width={t.width} $active={t.active}>
              {t.icon}
              {t.name}
            </Tab>
          ))}
        </TabStrip>
        <Toolbar>
          <ToolRow>
            {tools.map((t) => (
              <FaceButton key={t.name} $width={64} $height={57} aria-label={t.name}>
                {t.icon}
              </FaceButton>
            ))}
          </ToolRow>
        </Toolbar>
        <Desktop>
          <CurrencyWindow />
          <UsersWindow />
        </Desktop>
        <StatusBar>
          <StatusText>Versión 18.04.24</StatusText>
          <StatusText $tone="muted">Buscar Actualizaciones</StatusText>
          <StatusText $tone="ok">Licencia Activa</StatusText>
        </StatusBar>
      </Page>
    </>
  );
}
